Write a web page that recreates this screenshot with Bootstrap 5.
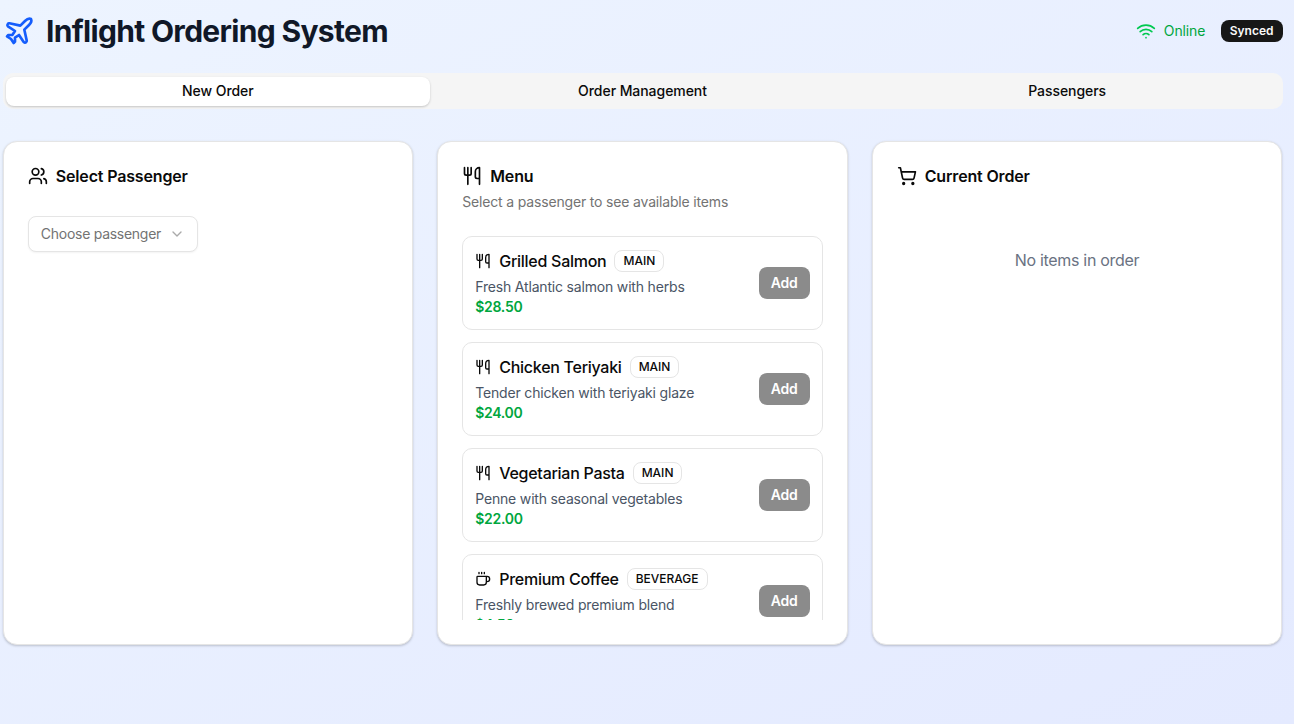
<!DOCTYPE html>
<html lang="en">
<head>
<meta charset="utf-8">
<meta name="viewport" content="width=device-width, initial-scale=1">
<title>Inflight Ordering System</title>
<link href="https://cdn.jsdelivr.net/npm/bootstrap@5.3.0/dist/css/bootstrap.min.css" rel="stylesheet">
<style>
body{font-family:Inter,"Liberation Sans",sans-serif;font-size:14px;line-height:20px;color:#0a0a0a;height:724px;overflow:hidden;background:linear-gradient(to bottom right,#edf4ff,#e4eaff)}
svg{fill:none;stroke:currentColor;stroke-width:2;stroke-linecap:round;stroke-linejoin:round;flex-shrink:0}
.page{width:1280px;margin-left:2.5px;padding-top:13px}
.brand{gap:11.5px;height:36px}
.brand h1{font-size:30px;line-height:36px;font-weight:700;color:#101828;letter-spacing:-.68px}
.plane{color:#155dfc}
.online{color:#00a63e;gap:8px;letter-spacing:-.12px;margin-right:-.6px}
.online svg{color:#00c950}
.synced{background:#171717;color:#fafafa;font-size:12px;line-height:16px;font-weight:600;padding:3px 9px;border-radius:8px}
.tabs{background:#f5f5f5;border-radius:10px;height:36px;padding:3.5px 3px 3.5px;margin-top:24px}
.tabs .nav-link{color:#0a0a0a;font-weight:500;padding:0;height:29px;line-height:28px;border-radius:8px;letter-spacing:-.06px}
.tabs .nav-link.active{background:#fff;color:#0a0a0a;box-shadow:0 1px 3px rgba(0,0,0,.1),0 1px 2px rgba(0,0,0,.1)}
.panels{gap:24px;margin:32px .3px 0}
.panel{flex:1 1 0;height:504px;border:1px solid #e5e5e5;border-radius:14px;padding:24px;box-shadow:0 1px 3px rgba(0,0,0,.1),0 1px 2px rgba(0,0,0,.1)}
.panel h2{font-size:16px;line-height:20px;font-weight:600;gap:8px;letter-spacing:-.16px}
.desc{color:#737373;margin-top:6px;letter-spacing:-.17px}
.chooser{border:1px solid #e5e5e5;border-radius:8px;height:36px;width:170px;padding:0 12px;color:#737373;margin-top:30px;background:#fff;box-shadow:0 1px 2px rgba(0,0,0,.05);letter-spacing:-.27px}
.chooser svg{opacity:.6}
.menu-list{height:384px;overflow:hidden;margin-top:24px;gap:12px}
.dish{border:1px solid #e5e5e5;border-radius:10px;padding:12px;height:94px;flex-shrink:0}
.dish h3{font-size:16px;line-height:24px;font-weight:500;letter-spacing:-.27px}
.kind{border:1px solid #e5e5e5;border-radius:8px;font-size:12px;line-height:16px;font-weight:500;padding:2px 8px}
.about{color:#4a5565;letter-spacing:-.18px}
.price{color:#00a63e;font-weight:600;letter-spacing:-.3px}
.add{background:#8b8b8b;color:#fff;font-size:14px;line-height:20px;font-weight:600;border-radius:8px;height:32px;width:51px;padding:0;border:0;letter-spacing:-.2px}
.empty{color:#6a7282;font-size:16px;line-height:24px;margin-top:62px;letter-spacing:-.3px}
</style>
</head>
<body>
<svg class="d-none">
<symbol id="utensils" viewBox="0 0 24 24"><path d="M3 2v7c0 1.1.9 2 2 2h4a2 2 0 0 0 2-2V2M7 2v20M21 15V2a5 5 0 0 0-5 5v6c0 1.1.9 2 2 2h3Zm0 0v7"/></symbol>
</svg>
<div class="page">
<header class="d-flex justify-content-between align-items-center">
<div class="brand d-flex align-items-center"><svg class="plane" width="32" height="32" viewBox="0 0 24 24"><path d="M17.8 19.2 16 11l3.5-3.5C21 6 21.5 4 21 3c-1-.5-3 0-4.5 1.5L13 8 4.8 6.2c-.5-.1-.9.1-1.1.5l-.3.5c-.2.5-.1 1 .3 1.3L9 12l-2 3H4l-1 1 3 2 2 3 1-1v-3l3-2 3.5 5.3c.3.4.8.5 1.3.3l.5-.2c.4-.3.6-.7.5-1.2z"/></svg><h1 class="m-0">Inflight Ordering System</h1></div>
<div class="d-flex align-items-center gap-3"><div class="online d-flex align-items-center"><svg width="20" height="20" viewBox="0 0 24 24"><path d="M12 20h.01M2 8.82a15 15 0 0 1 20 0M5 12.859a10 10 0 0 1 14 0M8.5 16.429a5 5 0 0 1 7 0"/></svg><span>Online</span></div><span class="synced">Synced</span></div>
</header>
<nav class="tabs nav nav-fill nav-justified">
<a class="nav-link active">New Order</a><a class="nav-link">Order Management</a><a class="nav-link">Passengers</a>
</nav>
<main class="panels d-flex">
<section class="panel bg-white">
<h2 class="d-flex align-items-center m-0"><svg width="20" height="20" viewBox="0 0 24 24"><path d="M16 21v-2a4 4 0 0 0-4-4H6a4 4 0 0 0-4 4v2M22 21v-2a4 4 0 0 0-3-3.87M16 3.13a4 4 0 0 1 0 7.75"/><circle cx="9" cy="7" r="4"/></svg><span>Select Passenger</span></h2>
<button class="chooser d-flex align-items-center justify-content-between"><span>Choose passenger</span><svg width="16" height="16" viewBox="0 0 24 24"><path d="m6 9 6 6 6-6"/></svg></button>
</section>
<section class="panel bg-white">
<h2 class="d-flex align-items-center m-0"><svg width="20" height="20"><use href="#utensils"/></svg><span>Menu</span></h2>
<div class="desc"><span>Select a passenger to see available items</span></div>
<div class="menu-list d-flex flex-column">
<article class="dish d-flex justify-content-between align-items-center"><div><div class="d-flex align-items-center gap-2 mb-1"><svg width="16" height="16"><use href="#utensils"/></svg><h3 class="m-0">Grilled Salmon</h3><span class="kind">MAIN</span></div><div class="about"><span>Fresh Atlantic salmon with herbs</span></div><div class="price">$28.50</div></div><button class="add">Add</button></article>
<article class="dish d-flex justify-content-between align-items-center"><div><div class="d-flex align-items-center gap-2 mb-1"><svg width="16" height="16"><use href="#utensils"/></svg><h3 class="m-0">Chicken Teriyaki</h3><span class="kind">MAIN</span></div><div class="about"><span>Tender chicken with teriyaki glaze</span></div><div class="price">$24.00</div></div><button class="add">Add</button></article>
<article class="dish d-flex justify-content-between align-items-center"><div><div class="d-flex align-items-center gap-2 mb-1"><svg width="16" height="16"><use href="#utensils"/></svg><h3 class="m-0">Vegetarian Pasta</h3><span class="kind">MAIN</span></div><div class="about"><span>Penne with seasonal vegetables</span></div><div class="price">$22.00</div></div><button class="add">Add</button></article>
<article class="dish d-flex justify-content-between align-items-center"><div><div class="d-flex align-items-center gap-2 mb-1"><svg width="16" height="16" viewBox="0 0 24 24"><path d="M10 2v2M14 2v2M6 2v2M16 8a1 1 0 0 1 1 1v8a4 4 0 0 1-4 4H7a4 4 0 0 1-4-4V9a1 1 0 0 1 1-1h14a4 4 0 1 1 0 8h-1"/></svg><h3 class="m-0">Premium Coffee</h3><span class="kind">BEVERAGE</span></div><div class="about"><span>Freshly brewed premium blend</span></div><div class="price">$4.50</div></div><button class="add">Add</button></article>
</div>
</section>
<section class="panel bg-white">
<h2 class="d-flex align-items-center m-0"><svg width="20" height="20" viewBox="0 0 24 24"><circle cx="8" cy="21" r="1"/><circle cx="19" cy="21" r="1"/><path d="M2.05 2.05h2l2.66 12.42a2 2 0 0 0 2 1.58h9.78a2 2 0 0 0 1.95-1.57l1.65-7.43H5.12"/></svg><span>Current Order</span></h2>
<div class="empty text-center">No items in order</div>
</section>
</main>
</div>
<script src="https://cdn.jsdelivr.net/npm/bootstrap@5.3.0/dist/js/bootstrap.bundle.min.js"></script>
</body>
</html>
